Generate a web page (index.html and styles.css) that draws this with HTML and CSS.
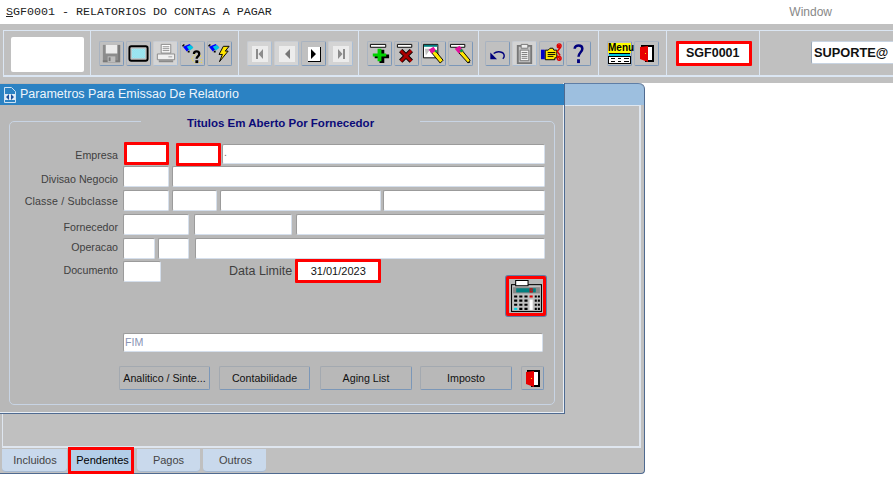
FILE: index.html
```html
<!DOCTYPE html>
<html lang="pt">
<head>
<meta charset="utf-8">
<title>SGF0001</title>
<link rel="stylesheet" href="styles.css">
</head>
<body>
<header class="titlebar">
  <span class="app-title"><u>S</u>GF0001 - RELATORIOS DO CONTAS A PAGAR</span>
  <span class="menu-window">Window</span>
</header>

<div class="toolbar">
  <div class="toolbar-inner">
    <div class="tb-group g-logo"><div class="logo-box"></div></div>

    <div class="tb-group g-a">
      <button class="tb-btn"><svg class="ico" viewBox="0 0 24 24"><path fill="#8c8c8c" d="M3 3h18v18H3z"/><path fill="#787878" d="M3 19h18v2H3zM19 3h2v18h-2z"/><path fill="#ececec" d="M6 3h12v9H6z"/><path fill="#bdbdbd" d="M8 15h8v6H8z"/><path fill="#787878" d="M9 16h2v4H9z"/></svg></button>
      <button class="tb-btn"><svg class="ico" viewBox="0 0 24 24"><defs><pattern id="dith" width="2" height="2" patternUnits="userSpaceOnUse"><path fill="#55d5e8" d="M0 0h2v2H0z"/><path fill="#e0f4f7" d="M0 0h1v1H0zM1 1h1v1H1z"/></pattern></defs><rect x="2.500" y="4.500" width="19" height="15" rx="2" fill="#c0c0c0" stroke="#000" stroke-width="2"/><path fill="url(#dith)" d="M5 7h14v10H5z"/></svg></button>
      <button class="tb-btn is-off"><svg class="ico" viewBox="0 0 24 24"><path fill="#fff" stroke="#8a8a8a" d="M7.500 2.500h10v9h-10z"/><path stroke="#8a8a8a" d="M9 5h7M9 7h7M9 9h7"/><path fill="#f0f0f0" stroke="#8a8a8a" d="M3.500 12.500h18v6h-18z"/><path fill="#8a8a8a" d="M5 19h15v2H5zM15 15h4v1h-4z"/></svg></button>
      <button class="tb-btn"><svg class="ico" viewBox="0 0 24 24"><path fill="#00f" d="M2 5l7-3 3 3-6 5z"/><path fill="#00c8e0" d="M6 5l4-2 3 3-4 3z"/><path fill="#000" d="M1 4l2-2 1 1-2 2zM7 9h2v2H7z"/><path fill="#ffe600" d="M12 15h1v1h-1zM14 13h1v1h-1zM20 14h1v1h-1zM21 18h1v1h-1zM12 19h1v1h-1zM14 21h1v1h-1zM19 21h1v1h-1zM11 17h1v1h-1zM21 21h1v1h-1z"/><path fill="none" stroke="#000" stroke-width="2.400" d="M13.500 12.500c0-3.500 5.500-3.500 5.500 0 0 2.500-2.700 2.300-2.700 5"/><path fill="#000" d="M15 19h3v3h-3z"/></svg></button>
      <button class="tb-btn"><svg class="ico" viewBox="0 0 24 24"><path fill="#00f" d="M1 5l7-3 3 3-6 5z"/><path fill="#00c8e0" d="M5 5l4-2 3 3-4 3z"/><path fill="#000" d="M0 4l2-2 1 1-2 2zM6 9h2v2H6z"/><path fill="#ffe600" stroke="#000" d="M16 4.500h6l-4 5h3l-9 11 3-7.500h-3.500z"/></svg></button>
    </div>

    <div class="tb-group g-b">
      <button class="tb-btn is-off"><svg class="nav" viewBox="0 0 16 16"><path fill="#ececec" d="M0 0h16v16H0z"/><path fill="#8c8c8c" d="M4 3h2v10H4zM11 3v10L6.500 8z"/></svg></button>
      <button class="tb-btn is-off"><svg class="nav" viewBox="0 0 16 16"><path fill="#ececec" d="M0 0h16v16H0z"/><path fill="#777" d="M11 3v10L6 8z"/></svg></button>
      <button class="tb-btn"><svg class="nav" viewBox="0 0 16 16"><path fill="#fff" d="M2 1h12v14H2z"/><path fill="#000" d="M5 3v10l5-5zM14 1h1v15H2v-1h12z"/></svg></button>
      <button class="tb-btn is-off"><svg class="nav" viewBox="0 0 16 16"><path fill="#ececec" d="M0 0h16v16H0z"/><path fill="#8c8c8c" d="M10 3h2v10h-2zM5 3v10l4.500-5z"/></svg></button>
    </div>

    <div class="tb-group g-c">
      <button class="tb-btn"><svg class="ico" viewBox="0 0 24 24"><path fill="#fff" stroke="#000" d="M2.500 2.500h16v3h-16z"/><path fill="#000" d="M11 7h5v5h5v4h-5v5h-5v-5H6v-4h5z" transform="translate(1 1)"/><path fill="#00d000" d="M10 7h4v5h5v3h-5v5h-4v-5H5v-3h5z"/></svg></button>
      <button class="tb-btn"><svg class="ico" viewBox="0 0 24 24"><path fill="#fff" stroke="#000" d="M2.500 2.500h15v3h-15z"/><path fill="none" stroke="#000" stroke-width="5" d="M6 9l11 11M17 9L6 20"/><path fill="none" stroke="#a80000" stroke-width="3" d="M6 9l11 11M17 9L6 20"/></svg></button>
      <button class="tb-btn"><svg class="ico" viewBox="0 0 24 24"><path fill="#fff" stroke="#000" d="M1.500 2.500h15v14h-15z"/><path fill="#008080" d="M2 3h14v2H2z"/><path fill="#c0c0c0" d="M3 7l6 0-5 7z"/><path fill="#ffe600" stroke="#000" d="M9 10l4-2 9 11-3 3z"/><path fill="#e0109c" d="M7 8l5-3 3 4-5 3z"/><path fill="#00a040" d="M13 9l2-1 1 2-2 1z"/></svg></button>
      <button class="tb-btn"><svg class="ico" viewBox="0 0 24 24"><path fill="#fff" stroke="#000" d="M1.500 2.500h15v3h-15z"/><path fill="#ffe600" stroke="#000" d="M10 11l3-3 9 11-2 3z"/><path fill="#e0109c" d="M6 7l5-3 4 5-5 3z"/><path fill="#00a040" d="M11 9l2-2 2 2-2 2z"/><path fill="#000" d="M20 21l2-1v2z"/></svg></button>
    </div>

    <div class="tb-group g-d">
      <button class="tb-btn"><svg class="ico" viewBox="0 0 24 24"><path fill="none" stroke="#00007c" stroke-width="1.500" d="M8 12c4-3 11-2 11 2.500 0 1-.5 2-1.500 3"/><path fill="#00007c" d="M4.500 11v7h7z"/></svg></button>
      <button class="tb-btn is-off"><svg class="ico" viewBox="0 0 24 24"><path fill="#c4c4c4" stroke="#777" stroke-width="2" d="M5 4h14v18H5z"/><path fill="#eee" stroke="#777" d="M8.500 2.500h7v4h-7z"/><path fill="#f4f4f4" stroke="#777" d="M7.500 8.500h9v11h-9z"/><path stroke="#777" d="M9 11h6M9 13h6M9 15h6M9 17h6"/></svg></button>
      <button class="tb-btn"><svg class="ico" viewBox="0 0 24 24"><path fill="#0000c8" d="M1 8h4v10H1z"/><path fill="#ffe600" stroke="#000" d="M5.500 8.500h3l2-2h3l1 2h3v8h-2v2h-10z"/><path stroke="#000" d="M8 11h8M8 13h8M8 15h6"/><path fill="none" stroke="#e00000" stroke-width="1.600" d="M18 3l3 3-3 4 3 4M21 3l-3 3M18 14l3 4"/><circle cx="20" cy="4" r="2" fill="none" stroke="#e00000" stroke-width="1.400"/><circle cx="20" cy="17" r="2" fill="none" stroke="#e00000" stroke-width="1.400"/></svg></button>
      <button class="tb-btn"><svg class="ico" viewBox="0 0 24 24"><path fill="none" stroke="#00007c" stroke-width="2.600" d="M8 7c0-4.500 8-4.500 8 0 0 3.500-4 4-4 8.500"/><path fill="#00007c" d="M10.500 18h3v4h-3z"/></svg></button>
    </div>

    <div class="tb-group g-e">
      <button class="tb-btn"><span class="menu-ico"><span class="menu-word">Menu</span><svg class="menu-lines" viewBox="0 0 23 11"><path fill="#000" d="M1 0h21v1H1z"/><path fill="#00c8e0" d="M1 1h21v2H1z"/><path fill="#fff" d="M1 3h21v8H1z"/><path fill="#000" d="M0 3h23v1H0zM0 3h1v8H0zM22 3h1v8h-1zM0 10h23v1H0zM3 5h4v1H3zM10 5h3v1h-3zM16 5h5v1h-5zM3 8h4v1H3zM10 8h3v1h-3zM16 8h5v1h-5z"/></svg></span></button>
      <button class="tb-btn"><svg class="door" viewBox="0 0 14 17"><use href="#door"/></svg></button>
    </div>

    <div class="tb-group g-f"><div class="form-code">SGF0001</div></div>
    <div class="tb-group g-g"><div class="user-box">SUPORTE@</div></div>
  </div>
</div>

<main class="desktop">
  <section class="window">
    <div class="window-head"></div>
    <div class="window-panel"></div>
    <nav class="tabs">
      <span class="tab t-inc">Incluidos</span>
      <span class="tab t-pen">Pendentes</span>
      <span class="tab t-pag">Pagos</span>
      <span class="tab t-out">Outros</span>
    </nav>
  </section>

  <section class="dialog">
    <div class="dialog-title">
      <svg class="doc-ico" viewBox="0 0 12 16"><path fill="#2b82c3" stroke="#cfe2f3" d="M.5.500h7l4 4v11H.5z"/><path fill="#fff" d="M1 7h10v6H1z" opacity=".85"/><path fill="#1c4f9c" d="M2 10l3-3v6zM10 10L7 7v6z"/></svg>
      <span>Parametros Para Emissao De Relatorio</span>
    </div>
    <div class="frame">
      <div class="legend">Titulos Em Aberto Por Fornecedor</div>

      <div class="row">
        <label class="lbl">Empresa</label>
        <div class="fld red w45 ml1"></div>
        <div class="fld-pair">
          <div class="fld red w45 mt1"></div>
        </div>
        <div class="fld w323 mt2 hs"><span class="dot">.</span></div>
      </div>
      <div class="row">
        <label class="lbl">Divisao Negocio</label>
        <div class="fld w46"></div>
        <div class="fld w373 g3"></div>
      </div>
      <div class="row">
        <label class="lbl l4 wide">Classe / Subclasse</label>
        <div class="fld w46"></div>
        <div class="fld w45 g3"></div>
        <div class="fld w161 g3"></div>
        <div class="fld w162 g2"></div>
      </div>
      <div class="row">
        <label class="lbl">Fornecedor</label>
        <div class="fld w66"></div>
        <div class="fld w98 g5"></div>
        <div class="fld w249 g4"></div>
      </div>
      <div class="row short">
        <label class="lbl l2">Operacao</label>
        <div class="fld w32"></div>
        <div class="fld w31 g3"></div>
        <div class="fld w350 g6"></div>
      </div>
      <div class="row last">
        <label class="lbl l4">Documento</label>
        <div class="fld w38 mt2"></div>
        <label class="data-lbl">Data Limite</label>
        <div class="fld red date">31/01/2023</div>
      </div>

      <div class="calc-row">
        <button class="calc-btn">
          <svg viewBox="0 0 32 32" class="calc-ico">
            <path fill="#000" d="M1 4h30v27H1z"/><path fill="#c0c0c0" d="M2 5h28v25H2z"/>
            <path fill="#fff" stroke="#000" d="M5.500.5h12v5h-12z"/>
            <path fill="#888" d="M3 7h26v6H3z"/><path fill="#008080" d="M6 8h19v4H6z"/><path fill="none" stroke="#e00000" d="M19.500 8.500h2v3h-2z"/>
            <path fill="#000" d="M4 15h3v2H4zM9 15h3v2H9zM14 15h3v2h-3zM24 15h2v2h-2zM27 15h2v2h-2zM4 19h3v2H4zM9 19h3v2H9zM14 19h3v2h-3zM24 19h2v2h-2zM27 19h2v2h-2zM4 23h3v2H4zM9 23h3v2H9zM14 23h3v2h-3zM24 23h2v2h-2zM27 23h2v2h-2zM9 27h3v2H9zM14 27h3v2h-3zM24 27h2v2h-2zM27 27h2v2h-2z"/>
            <path fill="#e00000" d="M19 15h3v2h-3z"/><path fill="#fff" d="M19 19h3v10h-3z"/><path fill="#00d0e0" d="M4 27h3v2H4z"/>
          </svg>
        </button>
      </div>

      <div class="fld fim">FIM</div>

      <div class="btn-row">
        <button class="btn">Analitico / Sinte...</button>
        <button class="btn">Contabilidade</button>
        <button class="btn b-aging">Aging List</button>
        <button class="btn b-imp">Imposto</button>
        <button class="btn b-exit"><svg class="door" viewBox="0 0 14 17"><use href="#door"/></svg></button>
      </div>
    </div>
  </section>
</main>

<svg class="defs" aria-hidden="true"><defs><g id="door"><path fill="#fff" d="M8 1h5v14H8z"/><path fill="#000" d="M1 0h13v17H5v-2h7V2H1z"/><path fill="#e80000" d="M0 2l8-1v16l-8-3z"/><path fill="#ffe600" d="M5 8h1v1H5z"/></g></defs></svg>
</body>
</html>
```
FILE: styles.css
```css
* { box-sizing: border-box; }
html, body { margin: 0; padding: 0; }
body { width: 893px; height: 480px; overflow: hidden; background: #fff; font-family: "Liberation Sans", Arial, sans-serif; position: relative; }
.defs { width: 0; height: 0; position: absolute; }

.titlebar { height: 24px; display: flex; align-items: center; justify-content: space-between; padding: 0 61px 0 6px; }
.app-title { font: 11.67px "Liberation Mono", monospace; color: #222; white-space: pre; }
.menu-window { font-size: 12px; color: #888; }

.toolbar { height: 59px; background: #c0c0c0; padding: 6px 0 0 3px; }
.toolbar-inner { display: flex; height: 47px; border-top: 1px solid #dbe6f3; border-bottom: 2px solid #dbe6f3; border-left: 1px solid #dbe6f3; }
.tb-group { display: flex; flex: none; align-items: flex-start; gap: 2px; border-right: 1px solid #dbe6f3; padding-top: 10px; }
.g-logo { width: 87px; padding: 6px 0 0 7px; }
.logo-box { width: 73px; height: 35px; background: #fff; border-radius: 2px; }
.g-a { width: 148px; padding-left: 8px; }
.g-b { width: 120px; padding-left: 8px; }
.g-c { width: 120px; padding-left: 8px; }
.g-d { width: 120px; padding-left: 6px; }
.g-e { width: 68px; padding-left: 8px; }
.g-f { width: 93px; padding: 10px 0 0 9px; }
.g-g { width: 133px; padding: 10px 0 0 51px; border-right: 0; }

.tb-btn { width: 25px; height: 25px; padding: 0; flex: none; background: #c0c0c0; display: flex; align-items: center; justify-content: center; border: 1px solid; border-color: #a9b3c0 #7b97b8 #7b97b8 #a9b3c0; border-radius: 2px; }
.tb-btn.is-off { background: #d4d4d4; border-color: #c8ccd2 #a9bdd4 #a9bdd4 #c8ccd2; }
.ico { width: 23px; height: 23px; display: block; }
.nav { width: 16px; height: 16px; display: block; }
.door { width: 14px; height: 17px; display: block; }
.menu-ico { width: 23px; display: flex; flex-direction: column; }
.menu-word { height: 10px; background: #ff0; font: bold 10px/10px "Liberation Sans", sans-serif; color: #000; text-align: center; display: block; }
.menu-lines { width: 23px; height: 11px; display: block; }
.form-code { width: 76px; height: 25px; border: 3px solid #f00; background: #fff; font: bold 12.5px/19px "Liberation Sans", sans-serif; padding-left: 7px; color: #111; border-radius: 1px; }
.user-box { flex: none; width: 90px; height: 23px; background: #fff; border: 1px solid #c8d4e2; border-left-color: #9aa8b8; border-radius: 2px; font: bold 12.8px/22px "Liberation Sans", sans-serif; padding-left: 2px; color: #111; }

.desktop { display: block; }
.window { position: absolute; left: 0; top: 83px; width: 645px; height: 391px; background: #c0c0c0; border-right: 1px solid #4f6a90; border-bottom: 1px solid #4f6a90; border-radius: 0 6px 4px 0; display: flex; flex-direction: column; }
.window-head { height: 22px; flex: none; background: #9dbfdf; border-top: 1px solid #5f7ea6; border-radius: 0 6px 0 0; }
.window-panel { height: 343px; flex: none; margin: 0 3px 0 2px; background: #c0c0c0; border-top: 1px solid #dfe7f0; border-right: 2px solid #dfe6ef; border-bottom: 2px solid #dfe6ef; border-left: 1px solid #dfe6ef; }
.tabs { display: flex; flex: none; height: 25px; padding: 1px 0 0 2px; gap: 3px; }
.tab { height: 23px; background: #c9d9ec; border-radius: 0 0 4px 4px; font-size: 11px; line-height: 23px; text-align: center; color: #444; border-bottom: 1px solid #a5b9d2; }
.t-inc { width: 65px; margin-right: -2px; padding-left: 1px; }
.t-pen { width: 66px; height: 27px; margin-top: -2px; background: #b3cee8; border: 3px solid #f00; line-height: 21px; color: #000; border-radius: 0; padding-left: 3px; white-space: nowrap; }
.t-pag { width: 63px; }
.t-out { width: 63px; padding-left: 2px; }

.dialog { position: absolute; left: 0; top: 83px; width: 565px; height: 331px; background: #b8b8b8; border-right: 1px solid #4f6a90; border-bottom: 1px solid #4f6a90; box-shadow: inset -1px -1px 0 #e8eef5; display: flex; flex-direction: column; }
.dialog-title { height: 21px; margin-top: 1px; background: #2b82c3; color: #eef5fb; font-size: 12.5px; line-height: 21px; display: flex; align-items: center; gap: 4px; padding-left: 4px; flex: none; }
.doc-ico { width: 12px; height: 16px; display: block; }

.frame { position: relative; margin: 16px 0 0 9px; width: 546px; height: 284px; border: 1px solid #c8d4e4; border-radius: 5px; padding-top: 20px; flex: none; }
.legend { position: absolute; left: 131px; top: -7px; width: 279px; height: 16px; background: #b8b8b8; color: #0b0b78; font-weight: bold; font-size: 11.5px; line-height: 16px; text-align: center; }

.row { display: flex; align-items: flex-start; height: 24px; }
.row.short { height: 21px; }
.row.last { height: 25px; }
.lbl { width: 108px; margin-right: 5px; text-align: right; font-size: 10.67px; line-height: 14px; color: #3f3f3f; padding-top: 6px; flex: none; white-space: nowrap; }
.lbl.l4 { padding-top: 4px; }
.lbl.l2 { padding-top: 2px; }
.lbl.wide { letter-spacing: .15px; }
.fld { height: 21px; background: #fff; border: 1px solid; border-color: #9b9b9b #d5dfec #d5dfec #9b9b9b; border-radius: 2px; flex: none; font-size: 10.67px; color: #111; }
.fld.red { height: 23px; border: 3px solid #f00; border-radius: 1px; }
.fld-pair { margin-left: 7px; }
.hs { height: 20px; }
.w45 { width: 45px; } .w46 { width: 46px; } .w31 { width: 31px; } .w32 { width: 32px; } .w38 { width: 38px; }
.w66 { width: 66px; } .w98 { width: 98px; } .w161 { width: 161px; } .w162 { width: 162px; } .w249 { width: 249px; } .w323 { width: 323px; } .w350 { width: 350px; } .w373 { width: 373px; }
.g2 { margin-left: 2px; } .g3 { margin-left: 3px; } .g4 { margin-left: 4px; } .g5 { margin-left: 5px; } .g6 { margin-left: 6px; }
.ml1 { margin-left: 1px; } .mt1 { margin-top: 1px; } .mt2 { margin-top: 2px; }
.w323.mt2 { margin-left: 1px; }
.dot { display: block; padding-left: 1px; line-height: 14px; color: #777; }
.data-lbl { margin: 4px 3px 0 68px; font-size: 12.5px; line-height: 16px; color: #3f3f3f; white-space: nowrap; }
.fld.date { width: 86px; height: 24px; text-align: center; line-height: 18px; font-size: 11px; color: #111; }

.calc-row { display: flex; justify-content: flex-end; margin: -8px 8px 0 0; height: 40px; }
.calc-btn { width: 40px; height: 40px; padding: 0; background: #b8b8b8; border: 3px solid #f00; box-shadow: 0 0 0 1px #5f7ea6; border-radius: 2px; display: flex; align-items: center; justify-content: center; }
.calc-ico { width: 33px; height: 33px; display: block; }

.fim { margin: 17px 0 0 113px; width: 420px; height: 19px; line-height: 17px; padding-left: 1px; color: #8a94b4; }

.btn-row { display: flex; margin: 14px 0 0 109px; }
.btn { width: 91px; height: 24px; margin-right: 9px; padding: 0; background: #b8b8b8; border: 1px solid; border-color: #a3a9b0 #7b97b8 #7b97b8 #a3a9b0; border-radius: 2px; font: 10.67px "Liberation Sans", sans-serif; color: #111; flex: none; white-space: nowrap; }
.btn.b-aging { width: 92px; margin-right: 8px; margin-left: 1px; }
.btn.b-imp { width: 92px; }
.btn.b-exit { width: 23px; margin: 0; display: flex; align-items: center; justify-content: center; }
```
